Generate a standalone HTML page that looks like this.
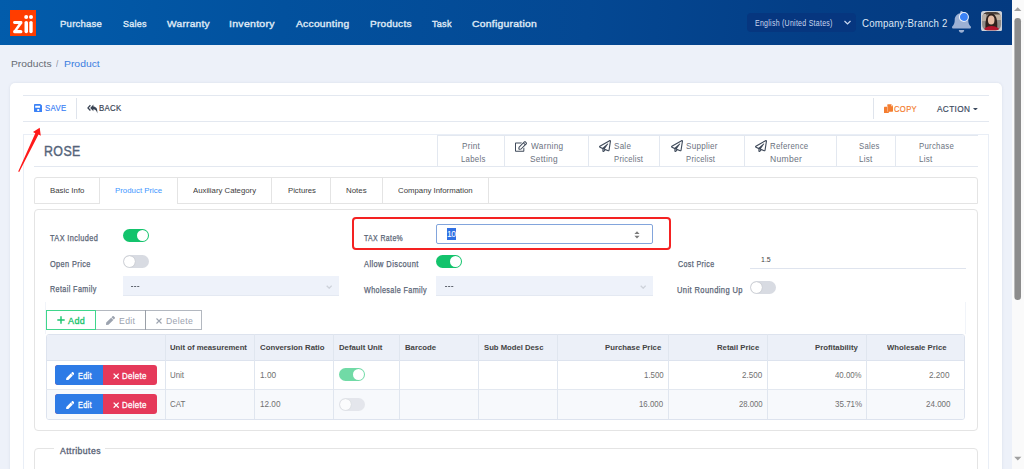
<!DOCTYPE html>
<html><head><meta charset="utf-8">
<style>
*{box-sizing:border-box;margin:0;padding:0}
html,body{width:1024px;height:469px;overflow:hidden}
body{position:relative;background:#edf1f9;font-family:"Liberation Sans",sans-serif;color:#333}
.a{position:absolute;white-space:nowrap}
.tx{line-height:1}
.hl{position:absolute;height:1px}
.vl{position:absolute;width:1px}
.tg{position:absolute;width:26px;height:13px;border-radius:7px;background:#d8dbe2}
.tg::after{content:"";position:absolute;left:1px;top:1px;width:11px;height:11px;border-radius:50%;background:#fff;box-shadow:0 0 1px rgba(0,0,0,.3)}
.tg.on{background:#13c36c}
.tg.on::after{left:14px;box-shadow:none}
.tg.dis{opacity:.6}
.sel{position:absolute;height:19.5px;background:#eef2fa;border-bottom:1px solid #e4e9f2}
</style></head><body>
<div class="a" style="left:0;top:0;width:1012px;height:45px;background:linear-gradient(95deg,#025cab 0%,#02519e 28%,#044893 58%,#043e86 80%,#043a80 100%)"></div>
<svg class="a" style="left:10px;top:9.6px" width="26" height="26.2" viewBox="0 0 26 26.2"><rect width="26" height="26.2" fill="#ff3d00"/><g fill="#fff"><rect x="3.1" y="10.9" width="9.3" height="3" rx="1.4"/><path d="M10.4 11.2 L12.4 13.2 L6.2 21.6 L3.6 21 Z"/><rect x="3.1" y="19.9" width="9.3" height="3.4" rx="1.6"/><circle cx="16.2" cy="7" r="2"/><rect x="14.5" y="10.9" width="3.5" height="12.4" rx="1.7"/><circle cx="21" cy="7" r="2"/><rect x="19.3" y="10.9" width="3.4" height="12.4" rx="1.7"/></g></svg>
<div class="a" style="left:747.3px;top:13.3px;width:108.7px;height:18.7px;background:#06367f;border-radius:4px"></div>
<svg class="a" style="left:843px;top:19px" width="9" height="7" viewBox="0 0 9 7"><path d="M1.5 2 L4.5 5 L7.5 2" fill="none" stroke="#cad8ef" stroke-width="1.2"/></svg>
<svg class="a" style="left:951.8px;top:11.3px" width="19" height="21.7" viewBox="0 0 448 512"><path fill="#9db1d4" d="M224 512c35.32 0 63.97-28.65 63.97-64H160.03c0 35.35 28.650 64 63.970 64zm215.39-149.71c-19.32-20.76-55.47-51.99-55.47-154.29 0-77.7-54.48-139.9-127.94-155.16V32c0-17.67-14.32-32-31.98-32s-31.98 14.33-31.98 32v20.84C118.56 68.1 64.08 130.3 64.08 208c0 102.3-36.15 133.53-55.47 154.29-6 6.45-8.66 14.16-8.61 21.71.11 16.4 12.98 32 32.1 32h383.8c19.12 0 32-15.6 32.1-32 .05-7.55-2.61-15.27-8.61-21.71z"/></svg>
<svg class="a" style="left:957px;top:10px" width="14" height="14" viewBox="0 0 14 14"><circle cx="6.9" cy="7" r="4.5" fill="#3b82f6" stroke="#eef3fb" stroke-width="1.1"/></svg>
<svg class="a" style="left:980.5px;top:10.8px" width="21.2" height="20.4" viewBox="0 0 21.2 20.4">
<defs><clipPath id="av"><rect x="1.1" y="1.1" width="19" height="18.2" rx="5.5"/></clipPath></defs>
<rect width="21.2" height="20.4" rx="2.6" fill="#ccd1d9"/>
<g clip-path="url(#av)"><rect x="0" y="0" width="21.2" height="20.4" fill="#8f8a86"/><rect x="13" y="1" width="8" height="8" fill="#c4b4a2"/><rect x="1" y="1" width="20" height="2.5" fill="#4a403a"/><rect x="1" y="3" width="4" height="7" fill="#b9aea4"/>
<path d="M4.6 19 C4 12 4.5 3 10.4 2.6 C16.3 3 16.8 12 16 19 Z" fill="#2e211d"/>
<ellipse cx="10.2" cy="9" rx="3.3" ry="4.6" fill="#e6bda5"/>
<ellipse cx="10.6" cy="21.8" rx="9.2" ry="6.8" fill="#b5152c"/></g>
</svg>
<div class="a" style="left:1012px;top:0;width:12px;height:469px;background:#fafafa"></div>
<svg class="a" style="left:1012px;top:0" width="12" height="469" viewBox="0 0 12 469"><path d="M2 11h7.4L5.7 7.2z" fill="#a0a0a0"/><rect x="2.4" y="18" width="6.6" height="282" rx="3.3" fill="#8c8c8c"/><path d="M2.2 456.8h7.2L5.8 460.6z" fill="#a0a0a0"/></svg>
<div class="a" style="left:10px;top:83px;width:991.5px;height:400px;background:#fff;border-radius:5px;box-shadow:0 0 3px rgba(40,60,100,.10)"></div>
<div class="hl" style="left:23px;top:95px;width:965.5px;background:#e3e8f0"></div>
<div class="hl" style="left:23px;top:121px;width:965.5px;background:#e3e8f0"></div>
<div class="vl" style="left:76px;top:98px;height:21px;background:#dfe4ec"></div>
<div class="vl" style="left:873px;top:98px;height:21px;background:#dfe4ec"></div>
<svg class="a" style="left:33.8px;top:104px" width="8.5" height="8.2" viewBox="0 0 448 480" preserveAspectRatio="none"><path fill="#3b82f6" d="M433.9 97.9l-83.9-83.9A48 48 0 0 0 316.1 0H48C21.5 0 0 21.5 0 48v384c0 26.5 21.5 48 48 48h352c26.5 0 48-21.5 48-48V131.9a48 48 0 0 0-14.1-34zM224 416c-35.3 0-64-28.7-64-64 0-35.3 28.7-64 64-64s64 28.7 64 64c0 35.3-28.7 64-64 64zm96-304.5V212c0 6.6-5.4 12-12 12H76c-6.6 0-12-5.4-12-12V108c0-6.6 5.4-12 12-12h228.5c3.2 0 6.2 1.3 8.5 3.5l3.5 3.5A12 12 0 0 1 320 111.5z"/></svg>
<svg class="a" style="left:87px;top:103.5px" width="11" height="10" viewBox="0 0 11 10"><path d="M3.4 1.3 L1 3.9 L3.4 6.5" fill="none" stroke="#3a4454" stroke-width="1.3"/><path d="M6.4 0.6 L3.2 3.9 L6.4 7.2 Z" fill="#3a4454"/><path d="M6 2.6 C9 2.6 10.8 4.6 10.3 9.4 C9.6 6.8 8.3 5.3 6 5.3 Z" fill="#3a4454"/></svg>
<svg class="a" style="left:883.6px;top:104.2px" width="9.2" height="9.2" viewBox="0 0 10 10"><rect x="0" y="3" width="5.2" height="7" rx=".6" fill="#f47d30"/><path d="M4.2 0.3h3.6l2 2v5.6a.6 .6 0 0 1-.6.6H4.2a.6 .6 0 0 1-.6-.6V.9a.6 .6 0 0 1 .6-.6z" fill="#f47d30"/><path d="M7.6 0.3v2.2h2.2" fill="#fbc9a6"/><rect x="3.6" y="2.4" width="0.8" height="6" fill="#fff" opacity=".5"/></svg>
<svg class="a" style="left:973.3px;top:107.6px" width="4.8" height="2.6" viewBox="0 0 6 3"><path d="M0 0h6L3 3z" fill="#3d4b5f"/></svg>
<div class="a" style="left:23px;top:134px;width:966px;height:400px;border:1px solid #e9eef6;border-bottom:none"></div>
<div class="hl" style="left:34px;top:166px;width:944px;background:#e3e8f0"></div>
<div class="hl" style="left:437px;top:134.5px;width:541px;background:#e3e8f0"></div>
<div class="vl" style="left:437px;top:134.5px;height:32px;background:#e3e8f0"></div>
<div class="vl" style="left:504px;top:134.5px;height:32px;background:#e3e8f0"></div>
<div class="vl" style="left:588px;top:134.5px;height:32px;background:#e3e8f0"></div>
<div class="vl" style="left:659px;top:134.5px;height:32px;background:#e3e8f0"></div>
<div class="vl" style="left:744px;top:134.5px;height:32px;background:#e3e8f0"></div>
<div class="vl" style="left:836px;top:134.5px;height:32px;background:#e3e8f0"></div>
<div class="vl" style="left:895px;top:134.5px;height:32px;background:#e3e8f0"></div>
<svg class="a" style="left:515px;top:140.6px" width="12" height="11" viewBox="0 0 576 512"><path fill="#3f4a5a" d="M402.3 344.9l32-32c5-5 13.7-1.5 13.7 5.7V464c0 26.5-21.5 48-48 48H48c-26.5 0-48-21.5-48-48V112c0-26.5 21.5-48 48-48h273.5c7.1 0 10.7 8.6 5.7 13.7l-32 32c-1.5 1.5-3.5 2.3-5.7 2.3H48v352h352V350.5c0-2.1.8-4.1 2.3-5.6zm156.6-201.8L296.3 405.7l-90.4 10c-26.2 2.9-48.5-19.2-45.6-45.6l10-90.4L432.9 17.1c22.9-22.9 59.9-22.9 82.7 0l43.2 43.2c22.9 22.9 22.9 60 .1 82.8zM460.1 174L402 115.9 216.2 301.8l-7.3 65.3 65.3-7.3L460.1 174zm64.8-79.7l-43.2-43.2c-4.1-4.1-10.8-4.1-14.8 0L436 82l58.1 58.1 30.9-30.9c4-4.2 4-10.8-.1-14.9z"/></svg>
<svg class="a" style="left:599px;top:140.2px" width="12" height="12" viewBox="0 0 512 512"><path fill="#3f4a5a" d="M440 6.5L24 246.4c-34.4 19.9-31.1 70.8 5.7 85.9L144 379.6V464c0 46.4 59.2 65.5 86.6 28.6l43.8-59.1 111.9 46.2c5.9 2.4 12.1 3.6 18.3 3.6 8.2 0 16.3-2.1 23.6-6.2 12.8-7.2 21.6-20 23.9-34.5l59.4-387.2c6.1-40.1-36.9-68.8-71.5-48.9zM192 464v-64.6l36.6 15.1L192 464zm212.6-28.7l-153.8-63.5L391 169.5c10.7-15.5-9.5-33.5-23.7-21.2L155.8 332.6 48 288 464 48l-59.4 387.3z"/></svg>
<svg class="a" style="left:671px;top:140.2px" width="12" height="12" viewBox="0 0 512 512"><path fill="#3f4a5a" d="M440 6.5L24 246.4c-34.4 19.9-31.1 70.8 5.7 85.9L144 379.6V464c0 46.4 59.2 65.5 86.6 28.6l43.8-59.1 111.9 46.2c5.9 2.4 12.1 3.6 18.3 3.6 8.2 0 16.3-2.1 23.6-6.2 12.8-7.2 21.6-20 23.9-34.5l59.4-387.2c6.1-40.1-36.9-68.8-71.5-48.9zM192 464v-64.6l36.6 15.1L192 464zm212.6-28.7l-153.8-63.5L391 169.5c10.7-15.5-9.5-33.5-23.7-21.2L155.8 332.6 48 288 464 48l-59.4 387.3z"/></svg>
<svg class="a" style="left:755px;top:140.2px" width="12" height="12" viewBox="0 0 512 512"><path fill="#3f4a5a" d="M440 6.5L24 246.4c-34.4 19.9-31.1 70.8 5.7 85.9L144 379.6V464c0 46.4 59.2 65.5 86.6 28.6l43.8-59.1 111.9 46.2c5.9 2.4 12.1 3.6 18.3 3.6 8.2 0 16.3-2.1 23.6-6.2 12.8-7.2 21.6-20 23.9-34.5l59.4-387.2c6.1-40.1-36.9-68.8-71.5-48.9zM192 464v-64.6l36.6 15.1L192 464zm212.6-28.7l-153.8-63.5L391 169.5c10.7-15.5-9.5-33.5-23.7-21.2L155.8 332.6 48 288 464 48l-59.4 387.3z"/></svg>
<div class="a" style="left:34px;top:177px;width:944px;height:27px;border:1px solid #e4e4e4;border-radius:3px 3px 0 0"></div>
<div class="vl" style="left:99px;top:177px;height:27px;background:#e4e4e4"></div>
<div class="vl" style="left:177px;top:177px;height:27px;background:#e4e4e4"></div>
<div class="vl" style="left:271px;top:177px;height:27px;background:#e4e4e4"></div>
<div class="vl" style="left:330px;top:177px;height:27px;background:#e4e4e4"></div>
<div class="vl" style="left:382px;top:177px;height:27px;background:#e4e4e4"></div>
<div class="vl" style="left:488px;top:177px;height:27px;background:#e4e4e4"></div>
<div class="hl" style="left:100px;top:203px;width:77px;background:#fff"></div>
<div class="a" style="left:34px;top:209px;width:944px;height:222px;border:1px solid #e4e4e4;border-radius:4px"></div>
<div class="tg on" style="left:123px;top:229.4px"></div>
<div class="tg" style="left:123px;top:255px"></div>
<div class="tg on" style="left:436.3px;top:255.1px"></div>
<div class="tg" style="left:750.3px;top:281.1px"></div>
<div class="sel" style="left:123px;top:276.3px;width:215.7px"><svg width="6.4" height="4.2" viewBox="0 0 6.4 4.2" style="position:absolute;right:6.5px;top:8.6px"><path d="M0.7 0.7L3.2 3.2L5.7 0.7" fill="none" stroke="#cdd2da" stroke-width="1.3"/></svg></div>
<div class="sel" style="left:436.3px;top:276.3px;width:216.7px"><svg width="6.4" height="4.2" viewBox="0 0 6.4 4.2" style="position:absolute;right:6.5px;top:8.6px"><path d="M0.7 0.7L3.2 3.2L5.7 0.7" fill="none" stroke="#cdd2da" stroke-width="1.3"/></svg></div>
<svg class="a" style="left:130.8px;top:285.8px" width="9" height="1.4" viewBox="0 0 9 1.4"><g fill="#606670"><rect x="0" y="0" width="2.1" height="1.3"/><rect x="3.1" y="0" width="2.1" height="1.3"/><rect x="6.2" y="0" width="2.1" height="1.3"/></g></svg>
<svg class="a" style="left:444.5px;top:285.8px" width="9" height="1.4" viewBox="0 0 9 1.4"><g fill="#606670"><rect x="0" y="0" width="2.1" height="1.3"/><rect x="3.1" y="0" width="2.1" height="1.3"/><rect x="6.2" y="0" width="2.1" height="1.3"/></g></svg>
<div class="a" style="left:436.3px;top:224.3px;width:216.7px;height:19.3px;border:1px solid #82a5dc;border-radius:2px;background:#fff"></div>
<div class="a" style="left:447px;top:228.2px;width:8.8px;height:11.5px;background:#3170e3"></div>
<span class="a" style="left:447px;top:229.5px;font-size:8.5px;line-height:9px;color:#fff;letter-spacing:-.4px">10</span>
<svg class="a" style="left:633.5px;top:229.8px" width="6" height="10" viewBox="0 0 6 10"><path d="M0.4 4L3 1.2 5.6 4zM0.4 5.8L3 8.6 5.6 5.8z" fill="#7a7a7a"/></svg>
<div class="a" style="left:351.6px;top:216.6px;width:319.6px;height:33.3px;border:2px solid #f42222;border-radius:4px"></div>
<div class="hl" style="left:750.3px;top:268px;width:215.3px;background:#dfe4ee"></div>
<div class="a" style="left:46.2px;top:310.2px;width:156.3px;height:20.3px;border:1px solid #b3b8c0"></div>
<div class="a" style="left:46.2px;top:310.2px;width:49.8px;height:20.3px;border:1px solid #3fd68c"></div>
<div class="vl" style="left:145.4px;top:310.2px;height:20.3px;background:#9aa0a8"></div>
<svg class="a" style="left:56.9px;top:316.3px" width="8" height="8" viewBox="0 0 8 8"><path d="M4 0.3V7.7M0.3 4H7.7" stroke="#19c46d" stroke-width="1.4"/></svg>
<svg class="a" style="left:106.3px;top:316px" width="9" height="9" viewBox="0 0 512 512"><path fill="#9ca3af" d="M290.74 93.24l128.02 128.02-277.99 277.99-114.14 12.6C11.35 513.54-1.56 500.62.14 485.34l12.7-114.22 277.9-277.88zm207.2-19.06l-60.11-60.11c-18.75-18.75-49.16-18.75-67.91 0l-56.55 56.55 128.02 128.02 56.55-56.55c18.75-18.76 18.75-49.16 0-67.91z"/></svg>
<svg class="a" style="left:156px;top:318px" width="6" height="6" viewBox="0 0 6 6"><path d="M0.5 0.5L5.5 5.5M5.5 0.5L0.5 5.5" stroke="#9ca3af" stroke-width="1.1"/></svg>
<div class="vl" style="left:45px;top:302px;height:32px;background:#f1f4f9"></div>
<div class="vl" style="left:965px;top:302px;height:32px;background:#f1f4f9"></div>
<div class="a" style="left:46.25px;top:334.3px;width:918.75px;height:85.8px;border:1px solid #dde3ee;border-radius:3px;overflow:hidden">
  <div style="position:absolute;left:0;top:0;width:100%;height:26px;background:#ecf0f8"></div>
  <div style="position:absolute;left:0;top:55px;width:100%;height:30px;background:#f7f9fc"></div></div>
<div class="hl" style="left:46.25px;top:360px;width:918.75px;background:#dde3ee"></div>
<div class="hl" style="left:46.25px;top:389px;width:918.75px;background:#e3e8f0"></div>
<div class="vl" style="left:165px;top:334.3px;height:85px;background:#e0e6ef"></div>
<div class="vl" style="left:254px;top:334.3px;height:85px;background:#e0e6ef"></div>
<div class="vl" style="left:333px;top:334.3px;height:85px;background:#e0e6ef"></div>
<div class="vl" style="left:399px;top:334.3px;height:85px;background:#e0e6ef"></div>
<div class="vl" style="left:478px;top:334.3px;height:85px;background:#e0e6ef"></div>
<div class="vl" style="left:557px;top:334.3px;height:85px;background:#e0e6ef"></div>
<div class="vl" style="left:668px;top:334.3px;height:85px;background:#e0e6ef"></div>
<div class="vl" style="left:767px;top:334.3px;height:85px;background:#e0e6ef"></div>
<div class="vl" style="left:866px;top:334.3px;height:85px;background:#e0e6ef"></div>
<div class="a" style="left:54.7px;top:365.4px;width:102.4px;height:20px;border-radius:3px;overflow:hidden;background:#e5395a"><div style="position:absolute;left:0;top:0;width:48px;height:100%;background:#2d7be6"></div></div>
<svg class="a" style="left:65.7px;top:371.7px" width="8.4" height="8.2" viewBox="0 0 512 512"><path fill="#fff" d="M290.74 93.24l128.02 128.02-277.99 277.99-114.14 12.6C11.35 513.54-1.56 500.62.14 485.34l12.7-114.22 277.9-277.88zm207.2-19.06l-60.11-60.11c-18.75-18.75-49.16-18.75-67.91 0l-56.55 56.55 128.02 128.02 56.55-56.55c18.75-18.76 18.75-49.16 0-67.91z"/></svg>
<svg class="a" style="left:112.5px;top:372.59999999999997px" width="6.4" height="6.4" viewBox="0 0 6 6"><path d="M0.6 0.6L5.4 5.4M5.4 0.6L0.6 5.4" stroke="#fff" stroke-width="1.2"/></svg>
<div class="a" style="left:54.7px;top:394.3px;width:102.4px;height:20px;border-radius:3px;overflow:hidden;background:#e5395a"><div style="position:absolute;left:0;top:0;width:48px;height:100%;background:#2d7be6"></div></div>
<svg class="a" style="left:65.7px;top:400.6px" width="8.4" height="8.2" viewBox="0 0 512 512"><path fill="#fff" d="M290.74 93.24l128.02 128.02-277.99 277.99-114.14 12.6C11.35 513.54-1.56 500.62.14 485.34l12.7-114.22 277.9-277.88zm207.2-19.06l-60.11-60.11c-18.75-18.75-49.16-18.75-67.91 0l-56.55 56.55 128.02 128.02 56.55-56.55c18.75-18.76 18.75-49.16 0-67.91z"/></svg>
<svg class="a" style="left:112.5px;top:401.5px" width="6.4" height="6.4" viewBox="0 0 6 6"><path d="M0.6 0.6L5.4 5.4M5.4 0.6L0.6 5.4" stroke="#fff" stroke-width="1.2"/></svg>
<div class="tg on dis" style="left:339.3px;top:367.9px"></div>
<div class="tg dis" style="left:339.3px;top:397.5px"></div>
<div class="a" style="left:34px;top:448px;width:944px;height:40px;border:1px solid #e4e4e4;border-radius:4px"></div>
<div class="a" style="left:54px;top:445px;width:51px;height:8px;background:#fff"></div>
<svg class="a" style="left:0;top:120px" width="60" height="60" viewBox="0 120 60 60"><path d="M18.2 171.6 L35.3 133.2 L33.0 132.1 L39.7 127.8 L40.8 135.7 L38.5 134.6 L19.2 172.1 Z" fill="#ff1a1a"/></svg>
<span class="a tx" id="n1" style="left:59.77px;top:18.55px;font-size:9.6px;font-weight:400;color:#dde7f5;transform:scaleX(0.9911);transform-origin:0 0;-webkit-text-stroke:0.4px currentColor;letter-spacing:0.25px;">Purchase</span>
<span class="a tx" id="n2" style="left:122.62px;top:18.55px;font-size:9.6px;font-weight:400;color:#dde7f5;transform:scaleX(0.9353);transform-origin:0 0;-webkit-text-stroke:0.4px currentColor;letter-spacing:0.25px;">Sales</span>
<span class="a tx" id="n3" style="left:167.07px;top:18.55px;font-size:9.6px;font-weight:400;color:#dde7f5;transform:scaleX(1.0584);transform-origin:0 0;-webkit-text-stroke:0.4px currentColor;letter-spacing:0.25px;">Warranty</span>
<span class="a tx" id="n4" style="left:229.23px;top:18.55px;font-size:9.6px;font-weight:400;color:#dde7f5;transform:scaleX(1.0984);transform-origin:0 0;-webkit-text-stroke:0.4px currentColor;letter-spacing:0.25px;">Inventory</span>
<span class="a tx" id="n5" style="left:296.33px;top:18.55px;font-size:9.6px;font-weight:400;color:#dde7f5;transform:scaleX(1.0682);transform-origin:0 0;-webkit-text-stroke:0.4px currentColor;letter-spacing:0.25px;">Accounting</span>
<span class="a tx" id="n6" style="left:369.86px;top:18.55px;font-size:9.6px;font-weight:400;color:#dde7f5;transform:scaleX(1.0464);transform-origin:0 0;-webkit-text-stroke:0.4px currentColor;letter-spacing:0.25px;">Products</span>
<span class="a tx" id="n7" style="left:432.23px;top:18.55px;font-size:9.6px;font-weight:400;color:#dde7f5;transform:scaleX(0.9498);transform-origin:0 0;-webkit-text-stroke:0.4px currentColor;letter-spacing:0.25px;">Task</span>
<span class="a tx" id="n8" style="left:471.77px;top:18.55px;font-size:9.6px;font-weight:400;color:#dde7f5;transform:scaleX(1.0789);transform-origin:0 0;-webkit-text-stroke:0.4px currentColor;letter-spacing:0.25px;">Configuration</span>
<span class="a tx" id="lang" style="left:754.52px;top:19.63px;font-size:8.2px;font-weight:400;color:#cad8ef;transform:scaleX(0.8567);transform-origin:0 0;letter-spacing:0.3px;">English (United States)</span>
<span class="a tx" id="comp" style="left:861.67px;top:19.36px;font-size:10.3px;font-weight:400;color:#dde7f5;transform:scaleX(0.9365);transform-origin:0 0;letter-spacing:0.2px;">Company:Branch 2</span>
<span class="a tx" id="bc1" style="left:10.55px;top:58.52px;font-size:9.8px;font-weight:400;color:#666b73;transform:scaleX(1.0485);transform-origin:0 0;">Products</span>
<span class="a tx" id="bc2" style="left:55.83px;top:58.52px;font-size:9.8px;font-weight:400;color:#8a8f98;transform:scaleX(0.8337);transform-origin:0 0;">/</span>
<span class="a tx" id="bc3" style="left:63.51px;top:58.52px;font-size:9.8px;font-weight:400;color:#3b7de0;transform:scaleX(1.0585);transform-origin:0 0;">Product</span>
<span class="a tx" id="save" style="left:45.12px;top:104.30px;font-size:9.2px;font-weight:400;color:#3b82f6;transform:scaleX(0.8470);transform-origin:0 0;-webkit-text-stroke:0.2px currentColor;letter-spacing:0.4px;">SAVE</span>
<span class="a tx" id="back" style="left:99.14px;top:104.30px;font-size:9.2px;font-weight:400;color:#3a4454;transform:scaleX(0.8511);transform-origin:0 0;-webkit-text-stroke:0.2px currentColor;letter-spacing:0.4px;">BACK</span>
<span class="a tx" id="copy" style="left:894.11px;top:105.10px;font-size:9.2px;font-weight:400;color:#f47d30;transform:scaleX(0.8331);transform-origin:0 0;-webkit-text-stroke:0.2px currentColor;letter-spacing:0.4px;">COPY</span>
<span class="a tx" id="action" style="left:937.36px;top:105.10px;font-size:9.2px;font-weight:400;color:#3d4b5f;transform:scaleX(0.8957);transform-origin:0 0;-webkit-text-stroke:0.2px currentColor;letter-spacing:0.4px;">ACTION</span>
<span class="a tx" id="rose" style="left:44.45px;top:142.94px;font-size:15px;font-weight:400;color:#55647a;transform:scaleX(0.8267);transform-origin:0 0;-webkit-text-stroke:0.4px currentColor;letter-spacing:0.5px;">ROSE</span>
<span class="a tx" id="s1a" style="left:461.54px;top:142.16px;font-size:8.7px;font-weight:400;color:#6b7280;transform:scaleX(0.9384);transform-origin:0 0;letter-spacing:0.3px;">Print</span>
<span class="a tx" id="s1b" style="left:461.10px;top:154.66px;font-size:8.7px;font-weight:400;color:#6b7280;transform:scaleX(0.8971);transform-origin:0 0;letter-spacing:0.3px;">Labels</span>
<span class="a tx" id="s2a" style="left:530.94px;top:142.16px;font-size:8.7px;font-weight:400;color:#6b7280;transform:scaleX(0.9490);transform-origin:0 0;letter-spacing:0.3px;">Warning</span>
<span class="a tx" id="s2b" style="left:529.89px;top:154.66px;font-size:8.7px;font-weight:400;color:#6b7280;transform:scaleX(0.9591);transform-origin:0 0;letter-spacing:0.3px;">Setting</span>
<span class="a tx" id="s3a" style="left:613.96px;top:142.16px;font-size:8.7px;font-weight:400;color:#6b7280;transform:scaleX(0.9241);transform-origin:0 0;letter-spacing:0.3px;">Sale</span>
<span class="a tx" id="s3b" style="left:613.83px;top:154.66px;font-size:8.7px;font-weight:400;color:#6b7280;transform:scaleX(0.8829);transform-origin:0 0;letter-spacing:0.3px;">Pricelist</span>
<span class="a tx" id="s4a" style="left:685.73px;top:142.16px;font-size:8.7px;font-weight:400;color:#6b7280;transform:scaleX(0.9288);transform-origin:0 0;letter-spacing:0.3px;">Supplier</span>
<span class="a tx" id="s4b" style="left:685.97px;top:154.66px;font-size:8.7px;font-weight:400;color:#6b7280;transform:scaleX(0.8829);transform-origin:0 0;letter-spacing:0.3px;">Pricelist</span>
<span class="a tx" id="s5a" style="left:770.40px;top:142.16px;font-size:8.7px;font-weight:400;color:#6b7280;transform:scaleX(0.8994);transform-origin:0 0;letter-spacing:0.3px;">Reference</span>
<span class="a tx" id="s5b" style="left:770.45px;top:154.66px;font-size:8.7px;font-weight:400;color:#6b7280;transform:scaleX(0.9863);transform-origin:0 0;letter-spacing:0.3px;">Number</span>
<span class="a tx" id="s6a" style="left:858.85px;top:142.16px;font-size:8.7px;font-weight:400;color:#6b7280;transform:scaleX(0.8892);transform-origin:0 0;letter-spacing:0.3px;">Sales</span>
<span class="a tx" id="s6b" style="left:858.96px;top:154.66px;font-size:8.7px;font-weight:400;color:#6b7280;transform:scaleX(0.9256);transform-origin:0 0;letter-spacing:0.3px;">List</span>
<span class="a tx" id="s7a" style="left:918.96px;top:142.16px;font-size:8.7px;font-weight:400;color:#6b7280;transform:scaleX(0.8973);transform-origin:0 0;letter-spacing:0.3px;">Purchase</span>
<span class="a tx" id="s7b" style="left:918.58px;top:154.66px;font-size:8.7px;font-weight:400;color:#6b7280;transform:scaleX(0.9256);transform-origin:0 0;letter-spacing:0.3px;">List</span>
<span class="a tx" id="t1" style="left:50.04px;top:186.56px;font-size:8.0px;font-weight:400;color:#3c3c3c;transform:scaleX(0.9808);transform-origin:0 0;">Basic Info</span>
<span class="a tx" id="t2" style="left:114.98px;top:186.56px;font-size:8.0px;font-weight:400;color:#4096ff;transform:scaleX(0.9819);transform-origin:0 0;">Product Price</span>
<span class="a tx" id="t3" style="left:192.65px;top:186.56px;font-size:8.0px;font-weight:400;color:#3c3c3c;transform:scaleX(0.9712);transform-origin:0 0;">Auxiliary Category</span>
<span class="a tx" id="t4" style="left:287.65px;top:186.56px;font-size:8.0px;font-weight:400;color:#3c3c3c;transform:scaleX(0.9662);transform-origin:0 0;">Pictures</span>
<span class="a tx" id="t5" style="left:346.40px;top:186.56px;font-size:8.0px;font-weight:400;color:#3c3c3c;transform:scaleX(0.9849);transform-origin:0 0;">Notes</span>
<span class="a tx" id="t6" style="left:397.58px;top:186.56px;font-size:8.0px;font-weight:400;color:#3c3c3c;transform:scaleX(0.9760);transform-origin:0 0;">Company Information</span>
<span class="a tx" id="l1" style="left:49.58px;top:233.92px;font-size:8.3px;font-weight:400;color:#5a6576;transform:scaleX(0.8844);transform-origin:0 0;-webkit-text-stroke:0.25px currentColor;letter-spacing:0.45px;">TAX Included</span>
<span class="a tx" id="l2" style="left:49.64px;top:259.82px;font-size:8.3px;font-weight:400;color:#5a6576;transform:scaleX(0.8853);transform-origin:0 0;-webkit-text-stroke:0.25px currentColor;letter-spacing:0.45px;">Open Price</span>
<span class="a tx" id="l3" style="left:49.80px;top:285.42px;font-size:8.3px;font-weight:400;color:#5a6576;transform:scaleX(0.8671);transform-origin:0 0;-webkit-text-stroke:0.25px currentColor;letter-spacing:0.45px;">Retail Family</span>
<span class="a tx" id="l4" style="left:364.41px;top:234.02px;font-size:8.3px;font-weight:400;color:#5a6576;transform:scaleX(0.8374);transform-origin:0 0;-webkit-text-stroke:0.25px currentColor;letter-spacing:0.45px;">TAX Rate%</span>
<span class="a tx" id="l5" style="left:363.55px;top:259.92px;font-size:8.3px;font-weight:400;color:#5a6576;transform:scaleX(0.9009);transform-origin:0 0;-webkit-text-stroke:0.25px currentColor;letter-spacing:0.45px;">Allow Discount</span>
<span class="a tx" id="l6" style="left:363.98px;top:285.52px;font-size:8.3px;font-weight:400;color:#5a6576;transform:scaleX(0.8675);transform-origin:0 0;-webkit-text-stroke:0.25px currentColor;letter-spacing:0.45px;">Wholesale Family</span>
<span class="a tx" id="l7" style="left:677.62px;top:260.02px;font-size:8.3px;font-weight:400;color:#5a6576;transform:scaleX(0.8545);transform-origin:0 0;-webkit-text-stroke:0.25px currentColor;letter-spacing:0.45px;">Cost Price</span>
<span class="a tx" id="l8" style="left:677.32px;top:285.82px;font-size:8.3px;font-weight:400;color:#5a6576;transform:scaleX(0.9070);transform-origin:0 0;-webkit-text-stroke:0.25px currentColor;letter-spacing:0.45px;">Unit Rounding Up</span>
<span class="a tx" id="cp" style="left:760.79px;top:256.39px;font-size:7.0px;font-weight:400;color:#444444;transform:scaleX(0.9973);transform-origin:0 0;">1.5</span>
<span class="a tx" id="add" style="left:68.39px;top:317.33px;font-size:9.0px;font-weight:400;color:#19c46d;transform:scaleX(1.0047);transform-origin:0 0;-webkit-text-stroke:0.3px currentColor;letter-spacing:0.35px;">Add</span>
<span class="a tx" id="edt" style="left:119.41px;top:317.43px;font-size:9.0px;font-weight:400;color:#9ca3af;transform:scaleX(0.9646);transform-origin:0 0;letter-spacing:0.35px;">Edit</span>
<span class="a tx" id="del" style="left:165.57px;top:317.43px;font-size:9.0px;font-weight:400;color:#9ca3af;transform:scaleX(0.9637);transform-origin:0 0;letter-spacing:0.35px;">Delete</span>
<span class="a tx" id="h0" style="left:170.19px;top:343.67px;font-size:7.9px;font-weight:700;color:#444444;transform:scaleX(0.9802);transform-origin:0 0;">Unit of measurement</span>
<span class="a tx" id="h1" style="left:259.79px;top:343.67px;font-size:7.9px;font-weight:700;color:#444444;transform:scaleX(0.9876);transform-origin:0 0;">Conversion Ratio</span>
<span class="a tx" id="h2" style="left:339.18px;top:343.67px;font-size:7.9px;font-weight:700;color:#444444;transform:scaleX(0.9812);transform-origin:0 0;">Default Unit</span>
<span class="a tx" id="h3" style="left:404.73px;top:343.67px;font-size:7.9px;font-weight:700;color:#444444;transform:scaleX(0.9839);transform-origin:0 0;">Barcode</span>
<span class="a tx" id="h4" style="left:483.99px;top:343.67px;font-size:7.9px;font-weight:700;color:#444444;transform:scaleX(0.9751);transform-origin:0 0;">Sub Model Desc</span>
<span class="a tx" id="h5" style="left:605.27px;top:343.67px;font-size:7.9px;font-weight:700;color:#444444;transform:scaleX(0.9858);transform-origin:0 0;">Purchase Price</span>
<span class="a tx" id="h6" style="left:717.40px;top:343.67px;font-size:7.9px;font-weight:700;color:#444444;transform:scaleX(0.9818);transform-origin:0 0;">Retail Price</span>
<span class="a tx" id="h7" style="left:815.21px;top:343.67px;font-size:7.9px;font-weight:700;color:#444444;transform:scaleX(0.9877);transform-origin:0 0;">Profitability</span>
<span class="a tx" id="h8" style="left:887.25px;top:343.67px;font-size:7.9px;font-weight:700;color:#444444;transform:scaleX(0.9848);transform-origin:0 0;">Wholesale Price</span>
<span class="a tx" id="d00" style="left:170.28px;top:371.32px;font-size:8.3px;font-weight:400;color:#707070;transform:scaleX(0.9524);transform-origin:0 0;">Unit</span>
<span class="a tx" id="d01" style="left:259.71px;top:371.32px;font-size:8.3px;font-weight:400;color:#707070;transform:scaleX(0.9999);transform-origin:0 0;">1.00</span>
<span class="a tx" id="d02" style="left:644.01px;top:371.32px;font-size:8.3px;font-weight:400;color:#707070;transform:scaleX(0.9485);transform-origin:0 0;">1.500</span>
<span class="a tx" id="d03" style="left:742.23px;top:371.32px;font-size:8.3px;font-weight:400;color:#707070;transform:scaleX(0.9702);transform-origin:0 0;">2.500</span>
<span class="a tx" id="d04" style="left:834.81px;top:371.32px;font-size:8.3px;font-weight:400;color:#707070;transform:scaleX(0.9442);transform-origin:0 0;">40.00%</span>
<span class="a tx" id="d05" style="left:929.19px;top:371.32px;font-size:8.3px;font-weight:400;color:#707070;transform:scaleX(0.9859);transform-origin:0 0;">2.200</span>
<span class="a tx" id="d10" style="left:170.25px;top:400.42px;font-size:8.3px;font-weight:400;color:#707070;transform:scaleX(0.9569);transform-origin:0 0;">CAT</span>
<span class="a tx" id="d11" style="left:259.63px;top:400.42px;font-size:8.3px;font-weight:400;color:#707070;transform:scaleX(0.9840);transform-origin:0 0;">12.00</span>
<span class="a tx" id="d12" style="left:639.47px;top:400.42px;font-size:8.3px;font-weight:400;color:#707070;transform:scaleX(0.9476);transform-origin:0 0;">16.000</span>
<span class="a tx" id="d13" style="left:738.89px;top:400.42px;font-size:8.3px;font-weight:400;color:#707070;transform:scaleX(0.9327);transform-origin:0 0;">28.000</span>
<span class="a tx" id="d14" style="left:834.51px;top:400.42px;font-size:8.3px;font-weight:400;color:#707070;transform:scaleX(0.9647);transform-origin:0 0;">35.71%</span>
<span class="a tx" id="d15" style="left:925.51px;top:400.42px;font-size:8.3px;font-weight:400;color:#707070;transform:scaleX(0.9655);transform-origin:0 0;">24.000</span>
<span class="a tx" id="be1" style="left:77.93px;top:372.18px;font-size:8.6px;font-weight:400;color:#ffffff;transform:scaleX(0.8580);transform-origin:0 0;-webkit-text-stroke:0.3px currentColor;letter-spacing:0.35px;">Edit</span>
<span class="a tx" id="bd1" style="left:122.12px;top:372.18px;font-size:8.6px;font-weight:400;color:#ffffff;transform:scaleX(0.9155);transform-origin:0 0;-webkit-text-stroke:0.3px currentColor;letter-spacing:0.35px;">Delete</span>
<span class="a tx" id="be2" style="left:77.93px;top:400.98px;font-size:8.6px;font-weight:400;color:#ffffff;transform:scaleX(0.8580);transform-origin:0 0;-webkit-text-stroke:0.3px currentColor;letter-spacing:0.35px;">Edit</span>
<span class="a tx" id="bd2" style="left:122.12px;top:400.98px;font-size:8.6px;font-weight:400;color:#ffffff;transform:scaleX(0.9155);transform-origin:0 0;-webkit-text-stroke:0.3px currentColor;letter-spacing:0.35px;">Delete</span>
<span class="a tx" id="attr" style="left:59.78px;top:447.05px;font-size:8.8px;font-weight:400;color:#5a6577;transform:scaleX(0.9826);transform-origin:0 0;-webkit-text-stroke:0.35px currentColor;letter-spacing:0.45px;">Attributes</span>
</body></html>
